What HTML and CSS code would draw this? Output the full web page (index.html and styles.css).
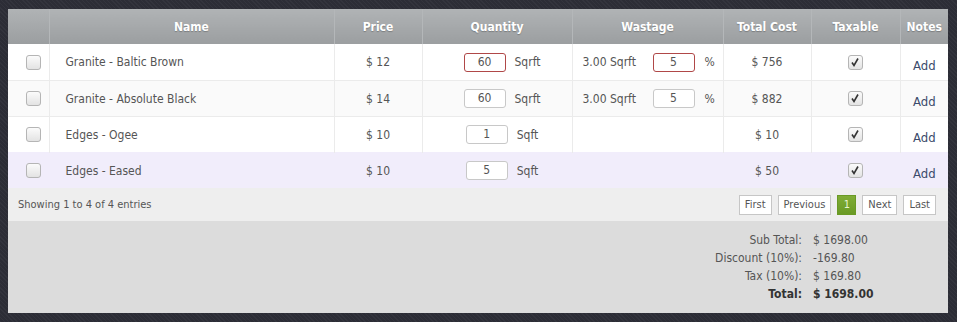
FILE: index.html
```html
<!DOCTYPE html>
<html>
<head>
<meta charset="utf-8">
<link rel="stylesheet" href="styles.css">
</head>
<body>
<div class="panel">
  <table class="grid">
    <colgroup>
      <col class="c-check"><col class="c-name"><col class="c-price"><col class="c-qty"><col class="c-waste"><col class="c-cost"><col class="c-tax"><col class="c-notes">
    </colgroup>
    <thead>
      <tr>
        <th></th><th>Name</th><th>Price</th><th>Quantity</th><th>Wastage</th><th>Total Cost</th><th>Taxable</th><th>Notes</th>
      </tr>
    </thead>
    <tbody>
      <tr>
        <td class="selcell"><span class="cb"></span></td>
        <td class="name">Granite - Baltic Brown</td>
        <td class="center">$ 12</td>
        <td><div class="qty"><span class="inp err">60</span><span class="unit">Sqrft</span></div></td>
        <td><div class="waste"><span class="wtxt">3.00 Sqrft</span><span class="inp err">5</span><span class="pct">%</span></div></td>
        <td class="center">$ 756</td>
        <td class="center"><span class="cb checked"><svg viewBox="0 0 14 14" width="14" height="14"><path d="M4 7.5 L6 10.5 L10 3.5" fill="none" stroke="#333" stroke-width="1.6"/></svg></span></td>
        <td class="center"><a class="add">Add</a></td>
      </tr>
      <tr class="alt">
        <td class="selcell"><span class="cb"></span></td>
        <td class="name">Granite - Absolute Black</td>
        <td class="center">$ 14</td>
        <td><div class="qty"><span class="inp">60</span><span class="unit">Sqrft</span></div></td>
        <td><div class="waste"><span class="wtxt">3.00 Sqrft</span><span class="inp">5</span><span class="pct">%</span></div></td>
        <td class="center">$ 882</td>
        <td class="center"><span class="cb checked"><svg viewBox="0 0 14 14" width="14" height="14"><path d="M4 7.5 L6 10.5 L10 3.5" fill="none" stroke="#333" stroke-width="1.6"/></svg></span></td>
        <td class="center"><a class="add">Add</a></td>
      </tr>
      <tr>
        <td class="selcell"><span class="cb"></span></td>
        <td class="name">Edges - Ogee</td>
        <td class="center">$ 10</td>
        <td><div class="qty"><span class="inp">1</span><span class="unit">Sqft</span></div></td>
        <td></td>
        <td class="center">$ 10</td>
        <td class="center"><span class="cb checked"><svg viewBox="0 0 14 14" width="14" height="14"><path d="M4 7.5 L6 10.5 L10 3.5" fill="none" stroke="#333" stroke-width="1.6"/></svg></span></td>
        <td class="center"><a class="add">Add</a></td>
      </tr>
      <tr class="hl">
        <td class="selcell"><span class="cb"></span></td>
        <td class="name">Edges - Eased</td>
        <td class="center">$ 10</td>
        <td><div class="qty"><span class="inp">5</span><span class="unit">Sqft</span></div></td>
        <td></td>
        <td class="center">$ 50</td>
        <td class="center"><span class="cb checked"><svg viewBox="0 0 14 14" width="14" height="14"><path d="M4 7.5 L6 10.5 L10 3.5" fill="none" stroke="#333" stroke-width="1.6"/></svg></span></td>
        <td class="center"><a class="add">Add</a></td>
      </tr>
    </tbody>
  </table>
  <div class="footer">
    <div class="info">Showing 1 to 4 of 4 entries</div>
    <div class="pager">
      <span class="pbtn">First</span>
      <span class="pbtn">Previous</span>
      <span class="pbtn active">1</span>
      <span class="pbtn">Next</span>
      <span class="pbtn">Last</span>
    </div>
  </div>
  <div class="totals">
    <div class="trow"><span class="tl">Sub Total:</span><span class="tv">$ 1698.00</span></div>
    <div class="trow"><span class="tl">Discount (10%):</span><span class="tv">-169.80</span></div>
    <div class="trow"><span class="tl">Tax (10%):</span><span class="tv">$ 169.80</span></div>
    <div class="trow bold"><span class="tl">Total:</span><span class="tv">$ 1698.00</span></div>
  </div>
</div>
</body>
</html>
```
FILE: styles.css
```css
html, body {
  margin: 0;
  padding: 0;
}
body {
  background-color: #2c2d36;
  background-image: repeating-linear-gradient(45deg, rgba(255,255,255,0.035) 0 1px, transparent 1px 3px);
  padding: 9px 0 0 8px;
  height: 322px;
  box-sizing: border-box;
  font-family: "DejaVu Sans Condensed", "Liberation Sans", sans-serif;
  font-size: 12px;
  color: #555;
}
.panel {
  width: 940px;
  height: 304px;
  background: #dcdcdc;
}
.grid {
  width: 940px;
  border-collapse: collapse;
  table-layout: fixed;
}
.c-check { width: 41px; }
.c-name { width: 285px; }
.c-price { width: 88px; }
.c-qty { width: 150px; }
.c-waste { width: 151px; }
.c-cost { width: 88px; }
.c-tax { width: 89px; }
.c-notes { width: 48px; }
.grid th {
  height: 35px;
  padding: 0;
  background: linear-gradient(#b0b3b5, #9b9ea0);
  color: #fff;
  font-weight: bold;
  font-size: 12px;
  text-shadow: 0 1px 1px rgba(0,0,0,0.25);
  border-left: 1px solid #b4b7b9;
  text-align: center;
}
.grid th:first-child { border-left: none; }
.grid td {
  height: 35px;
  padding: 0;
  border-top: 1px solid #ebebeb;
  border-left: 1px solid #ebebeb;
  background: #fff;
  vertical-align: middle;
}
.grid tbody tr:first-child td { border-top: none; height: 36px; }
.grid td:first-child { border-left: none; }
.grid tr.alt td { background: #fafafa; }
.grid tr.hl td { background: #f1edfb; border-left-color: #f1edfb; border-top-color: #f1edfb; }
.center { text-align: center; }
.selcell { text-align: left; padding-left: 18px !important; }
.name { padding-left: 16px !important; }
.cb {
  display: inline-block;
  width: 13px;
  height: 13px;
  border: 1px solid #b5b5b5;
  border-radius: 3px;
  background: linear-gradient(#fbfbfb, #e3e3e3);
  vertical-align: middle;
}
.cb.checked svg {
  display: block;
  margin: -1px 0 0 -1px;
}
.qty {
  display: flex;
  align-items: center;
  justify-content: center;
  padding-left: 10px;
}
.inp {
  display: inline-block;
  box-sizing: border-box;
  width: 42px;
  height: 19px;
  line-height: 17px;
  border: 1px solid #c8c8c8;
  border-radius: 3px;
  background: #fff;
  text-align: center;
  color: #555;
}
.inp.err { border-color: #b04848; }
.unit { margin-left: 9px; }
.waste {
  display: flex;
  align-items: center;
  padding-left: 10px;
}
.wtxt { width: 70px; }
.pct { margin-left: 10px; }
.add {
  color: #3b4b6b;
  font-size: 13px;
  display: inline-block;
  padding-top: 6px;
}
.footer {
  height: 33px;
  background: #eee;
  display: flex;
  align-items: center;
  justify-content: space-between;
  padding: 0 12px 0 10px;
  font-size: 11px;
}
.pager {
  display: flex;
  gap: 6px;
}
.pbtn {
  display: inline-block;
  height: 20px;
  line-height: 18px;
  box-sizing: border-box;
  padding: 0 5px;
  border: 1px solid #c6c6c6;
  background: #fff;
  color: #555;
}
.pbtn.active {
  background: linear-gradient(#80ad36, #6a9a25);
  border-color: #6a9a25;
  color: #e8f3d0;
  width: 19px;
  padding: 0;
  text-align: center;
}
.totals {
  padding-top: 10px;
}
.trow {
  display: flex;
  height: 18px;
  line-height: 18px;
}
.tl {
  width: 794px;
  text-align: right;
}
.tv {
  margin-left: 11px;
}
.trow.bold { font-weight: bold; color: #333; }
```
